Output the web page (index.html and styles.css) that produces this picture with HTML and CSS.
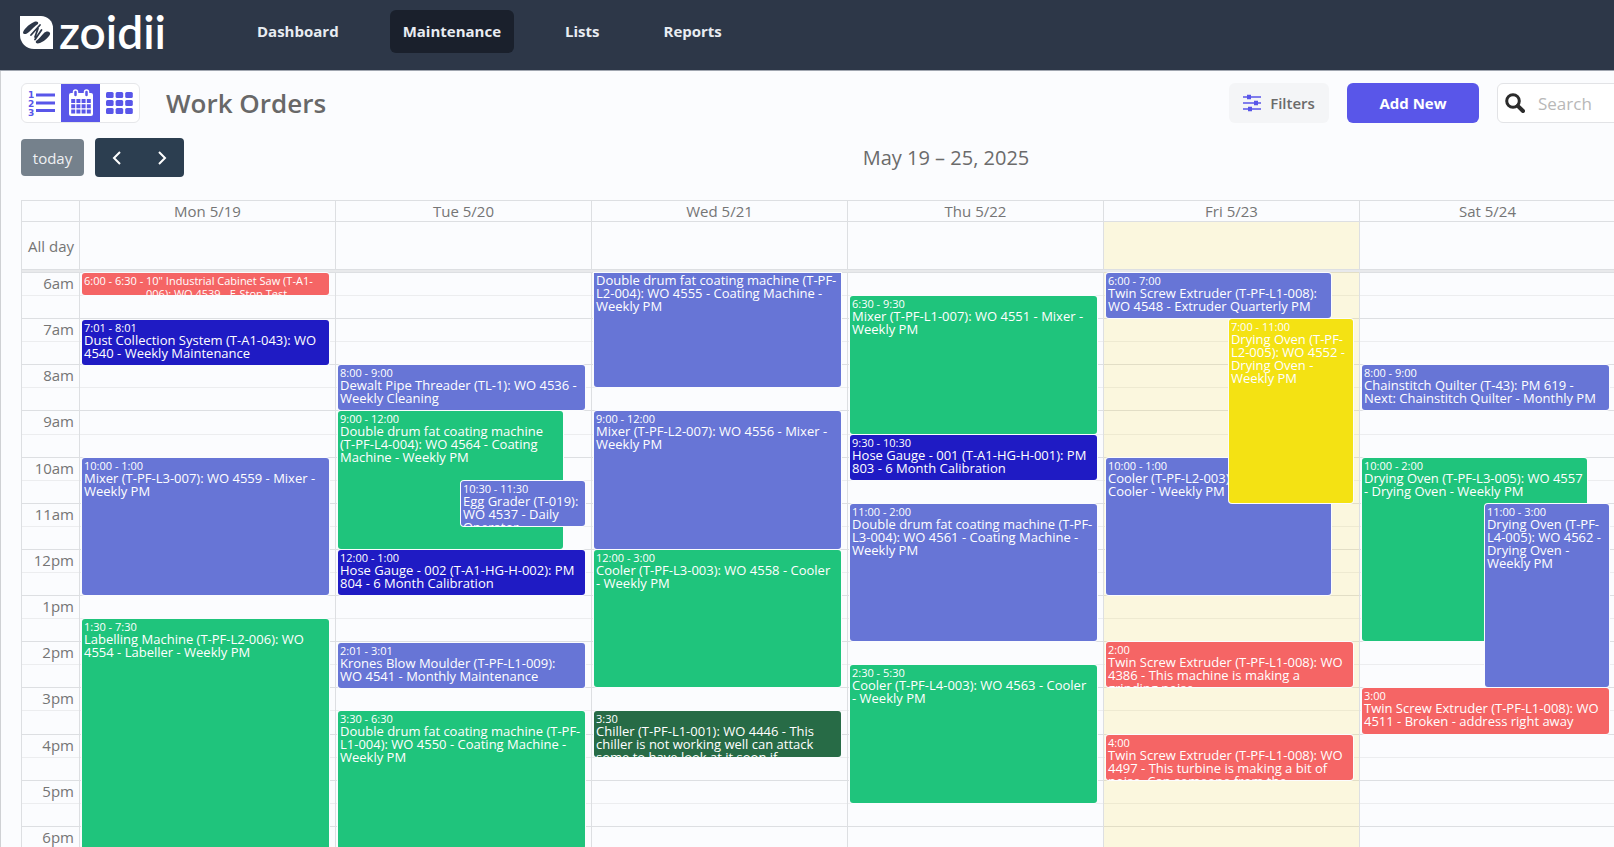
FILE: index.html
```
<!doctype html>

<html lang="en">
<head>
  <meta charset="utf-8">
  <title>Work Orders - Zoidii</title>
  <meta name="viewport" content="width=device-width, initial-scale=1" />
  <link rel="stylesheet" href="styles.css">
</head>

<body>
  <header class="topbar">
    <a class="logo" href="#">
      <svg width="33" height="33" viewBox="0 0 33 33" aria-hidden="true">
        <path fill="#fff" d="M0 0H21A12 12 0 0 1 33 12V33H14A14 14 0 0 1 0 19Z"/>
        <path fill="#2d3748" d="M3 17C3 14 9 8 14 6C17 5 19 6 18 8C15 10 11 14 9 16C7 18 4 19 3 17Z"/>
        <path fill="#2d3748" d="M30 17C31 19 25 25 20 27C17 28 15 27 16 25C19 23 22 19 24 17C26 15 29 15 30 17Z"/>
        <path d="M20 9L11 19M21.500 14L15 23.500M18 12.500L15 21" stroke="#2d3748" stroke-width="1.800" stroke-linecap="round"/>
      </svg>
      <span>zoidii</span>
    </a>
    <nav class="nav">
      <a href="#">Dashboard</a>
      <a href="#" class="active">Maintenance</a>
      <a href="#">Lists</a>
      <a href="#">Reports</a>
    </nav>
  </header>

  <main class="page">
    <div class="page-head">
      <div class="views">
        <button aria-label="List view">
          <svg width="28" height="28" viewBox="0 0 28 28">
            <g class="digits"><text x="0" y="9">1</text><text x="0" y="18">2</text><text x="0" y="27">3</text></g>
            <path d="M8 6H27M8 14H27M8 21.500H27" stroke="currentColor" stroke-width="3"/>
          </svg>
        </button>
        <button class="active" aria-label="Calendar view">
          <svg width="26" height="28" viewBox="0 0 26 28">
            <rect x="1" y="4" width="24" height="23" rx="2" fill="#fff"/>
            <path d="M3.200 12H22.800M3.200 17.300H22.800M3.200 22.600H22.800" stroke="#5956e9" stroke-width="4" stroke-dasharray="4 1.200"/>
            <rect x="5.500" y="1" width="4" height="7" rx="2" fill="#5956e9" stroke="#fff" stroke-width="1.500"/>
            <rect x="16.500" y="1" width="4" height="7" rx="2" fill="#5956e9" stroke="#fff" stroke-width="1.500"/>
          </svg>
        </button>
        <button aria-label="Grid view">
          <svg width="27" height="22" viewBox="0 0 27 22" fill="currentColor">
            <rect x="0" y="0" width="7.600" height="6" rx="1.500"/><rect x="9.600" y="0" width="7.600" height="6" rx="1.500"/><rect x="19.200" y="0" width="7.600" height="6" rx="1.500"/>
            <rect x="0" y="8" width="7.600" height="6" rx="1.500"/><rect x="9.600" y="8" width="7.600" height="6" rx="1.500"/><rect x="19.200" y="8" width="7.600" height="6" rx="1.500"/>
            <rect x="0" y="16" width="7.600" height="6" rx="1.500"/><rect x="9.600" y="16" width="7.600" height="6" rx="1.500"/><rect x="19.200" y="16" width="7.600" height="6" rx="1.500"/>
          </svg>
        </button>
      </div>
      <h1>Work Orders</h1>
      <div class="actions">
        <button class="filters">
          <svg width="18" height="18" viewBox="0 0 18 18" stroke="#5956e9" stroke-width="1.600" aria-hidden="true">
            <path d="M0 3H18M0 9H18M0 15H18"/>
            <path d="M4 3H8M11 9H15M5 15H9" stroke-width="4.500"/>
          </svg>
          Filters
        </button>
        <button class="add">Add New</button>
        <label class="search">
          <svg width="20" height="20" viewBox="0 0 20 20" fill="none" stroke="#2b2b2b" aria-hidden="true">
            <circle cx="8" cy="8" r="6.300" stroke-width="3"/>
            <path d="M12.800 12.800L18 18" stroke-width="4" stroke-linecap="round"/>
          </svg>
          <input type="text" placeholder="Search" aria-label="Search">
        </label>
      </div>
    </div>

    <div class="toolbar">
      <div class="toolbar-left">
        <button class="today-btn">today</button>
        <div class="prev-next">
          <button aria-label="Previous week">
            <svg width="10" height="16" viewBox="0 0 10 16"><path d="M8 2L2 8L8 14" fill="none" stroke="#fff" stroke-width="2"/></svg>
          </button>
          <button aria-label="Next week">
            <svg width="10" height="16" viewBox="0 0 10 16"><path d="M2 2L8 8L2 14" fill="none" stroke="#fff" stroke-width="2"/></svg>
          </button>
        </div>
      </div>
      <h2>May 19 – 25, 2025</h2>
    </div>

    <div class="calendar">
      <table class="days">
        <thead>
          <tr>
            <th class="axis"></th>
            <th>Mon 5/19</th>
            <th>Tue 5/20</th>
            <th>Wed 5/21</th>
            <th>Thu 5/22</th>
            <th>Fri 5/23</th>
            <th>Sat 5/24</th>
            <th></th>
          </tr>
        </thead>
        <tbody>
          <tr>
            <td class="axis">All day</td>
            <td></td>
            <td></td>
            <td></td>
            <td></td>
            <td class="today"></td>
            <td></td>
            <td></td>
          </tr>
        </tbody>
      </table>
      <div class="divider"></div>

      <div class="timegrid">
        <div class="slots">
          <div>6am</div><div></div>
          <div>7am</div><div></div>
          <div>8am</div><div></div>
          <div>9am</div><div></div>
          <div>10am</div><div></div>
          <div>11am</div><div></div>
          <div>12pm</div><div></div>
          <div>1pm</div><div></div>
          <div>2pm</div><div></div>
          <div>3pm</div><div></div>
          <div>4pm</div><div></div>
          <div>5pm</div><div></div>
          <div>6pm</div><div></div>
        </div>

        <!-- one grid row per minute, row 1 is 6:00 -->
        <div class="columns">
          <div class="day">
            <a href="#" class="event red short" style="grid-row: 1 / 31"><time>6:00 - 6:30 -&nbsp;</time><span>10" Industrial Cabinet Saw (T-A1-006): WO 4539 - E-Stop Test</span></a>
            <a href="#" class="event navy" style="grid-row: 62 / 122"><time>7:01 - 8:01</time><span>Dust Collection System (T-A1-043): WO 4540 - Weekly Maintenance</span></a>
            <a href="#" class="event blue" style="grid-row: 241 / 421"><time>10:00 - 1:00</time><span>Mixer (T-PF-L3-007): WO 4559 - Mixer - Weekly PM</span></a>
            <a href="#" class="event green" style="grid-row: 451 / 781"><time>1:30 - 7:30</time><span>Labelling Machine (T-PF-L2-006): WO 4554 - Labeller - Weekly PM</span></a>
          </div>

          <div class="day">
            <a href="#" class="event blue" style="grid-row: 121 / 181"><time>8:00 - 9:00</time><span>Dewalt Pipe Threader (TL-1): WO 4536 - Weekly Cleaning</span></a>
            <a href="#" class="event green under" style="grid-row: 181 / 361"><time>9:00 - 12:00</time><span>Double drum fat coating machine (T-PF-L4-004): WO 4564 - Coating Machine - Weekly PM</span></a>
            <a href="#" class="event blue over" style="grid-row: 271 / 331"><time>10:30 - 11:30</time><span>Egg Grader (T-019): WO 4537 - Daily Operator</span></a>
            <a href="#" class="event navy" style="grid-row: 361 / 421"><time>12:00 - 1:00</time><span>Hose Gauge - 002 (T-A1-HG-H-002): PM 804 - 6 Month Calibration</span></a>
            <a href="#" class="event blue" style="grid-row: 482 / 542"><time>2:01 - 3:01</time><span>Krones Blow Moulder (T-PF-L1-009): WO&nbsp;4541 - Monthly Maintenance</span></a>
            <a href="#" class="event green" style="grid-row: 571 / 751"><time>3:30 - 6:30</time><span>Double drum fat coating machine (T-PF-L1-004): WO 4550 - Coating Machine - Weekly PM</span></a>
          </div>

          <div class="day">
            <a href="#" class="event blue continued" style="grid-row: 1 / 151"><span>Double drum fat coating machine (T-PF-L2-004): WO 4555 - Coating Machine - Weekly PM</span></a>
            <a href="#" class="event blue" style="grid-row: 181 / 361"><time>9:00 - 12:00</time><span>Mixer (T-PF-L2-007): WO 4556 - Mixer - Weekly PM</span></a>
            <a href="#" class="event green" style="grid-row: 361 / 541"><time>12:00 - 3:00</time><span>Cooler (T-PF-L3-003): WO 4558 - Cooler - Weekly PM</span></a>
            <a href="#" class="event forest" style="grid-row: 571 / 631"><time>3:30</time><span>Chiller (T-PF-L1-001): WO 4446 - This chiller is not working well can attack some to have look at it soon if</span></a>
          </div>

          <div class="day">
            <a href="#" class="event green" style="grid-row: 31 / 211"><time>6:30 - 9:30</time><span>Mixer (T-PF-L1-007): WO 4551 - Mixer - Weekly PM</span></a>
            <a href="#" class="event navy" style="grid-row: 211 / 271"><time>9:30 - 10:30</time><span>Hose Gauge - 001 (T-A1-HG-H-001): PM 803 - 6 Month Calibration</span></a>
            <a href="#" class="event blue" style="grid-row: 301 / 481"><time>11:00 - 2:00</time><span>Double drum fat coating machine (T-PF-L3-004): WO 4561 - Coating Machine - Weekly PM</span></a>
            <a href="#" class="event green" style="grid-row: 511 / 691"><time>2:30 - 5:30</time><span>Cooler (T-PF-L4-003): WO 4563 - Cooler - Weekly PM</span></a>
          </div>

          <div class="day today">
            <a href="#" class="event blue under" style="grid-row: 1 / 61"><time>6:00 - 7:00</time><span>Twin Screw Extruder (T-PF-L1-008): WO 4548 - Extruder Quarterly PM</span></a>
            <a href="#" class="event blue under" style="grid-row: 241 / 421"><time>10:00 - 1:00</time><span>Cooler (T-PF-L2-003): WO 4560 - Cooler - Weekly PM</span></a>
            <a href="#" class="event yellow over" style="grid-row: 61 / 301"><time>7:00 - 11:00</time><span>Drying Oven (T-PF-L2-005): WO 4552 - Drying Oven - Weekly PM</span></a>
            <a href="#" class="event red" style="grid-row: 481 / 541"><time>2:00</time><span>Twin Screw Extruder (T-PF-L1-008): WO 4386 - This machine is making a grinding noise</span></a>
            <a href="#" class="event red" style="grid-row: 601 / 661"><time>4:00</time><span>Twin Screw Extruder (T-PF-L1-008): WO 4497 - This turbine is making a bit of noise. Can someone from the</span></a>
          </div>

          <div class="day">
            <a href="#" class="event blue" style="grid-row: 121 / 181"><time>8:00 - 9:00</time><span>Chainstitch Quilter (T-43): PM 619 - Next: Chainstitch Quilter - Monthly PM</span></a>
            <a href="#" class="event green under" style="grid-row: 241 / 481"><time>10:00 - 2:00</time><span>Drying Oven (T-PF-L3-005): WO 4557 - Drying Oven - Weekly PM</span></a>
            <a href="#" class="event blue over" style="grid-row: 301 / 541"><time>11:00 - 3:00</time><span>Drying Oven (T-PF-L4-005): WO 4562 - Drying Oven - Weekly PM</span></a>
            <a href="#" class="event red" style="grid-row: 541 / 601"><time>3:00</time><span>Twin Screw Extruder (T-PF-L1-008): WO 4511 - Broken - address right away</span></a>
          </div>

          <div class="day"></div>
        </div>
      </div>
    </div>
  </main>
</body>
</html>
```
FILE: styles.css
```
* {
  box-sizing: border-box;
}

body {
  margin: 0;
  background: #fbfcfe;
  color: #6b6b6b;
  font-family: "Open Sans", "Noto Sans", sans-serif;
  font-size: 15px;
  overflow: hidden;
}

button {
  border: 0;
  padding: 0;
  font: inherit;
  color: inherit;
  cursor: pointer;
}

a {
  color: inherit;
  text-decoration: none;
}

h1, h2 {
  margin: 0;
}

.topbar {
  display: flex;
  align-items: flex-start;
  height: 71px;
  padding: 10px 20px 0;
  background: #2d3748;
  border-bottom: 1px solid #a0a6b0;
  color: #e8ecf2;
}

.logo {
  display: flex;
  align-items: center;
  gap: 6px;
  width: 224px;
  height: 44px;
  color: #fff;
  font-family: Lato, sans-serif;
  font-size: 46px;
  font-weight: 600;
  line-height: 44px;
}

.nav {
  display: flex;
  gap: 38px;
}

.nav a {
  padding: 0 13px;
  border-radius: 6px;
  font-weight: 700;
  line-height: 43px;
}

.nav .active {
  background: #1a202c;
}

/* the week is wider than the window, sunday runs off the right side */
.page {
  width: calc(100% + 257px);
  padding: 12px 0 0 20px;
  border-left: 1px solid #cfd1d4;
}

.page-head {
  display: flex;
  align-items: center;
  padding-right: 20px;
}

.views {
  display: flex;
  height: 40px;
  width: 119px;
  border: 1px solid #e6e7ea;
  border-radius: 6px;
  background: #fff;
  overflow: hidden;
  color: #5956e9;
}

.views button {
  display: flex;
  flex: 1;
  align-items: center;
  justify-content: center;
  background: none;
}

.views .active {
  background: #5956e9;
}

.digits {
  fill: currentColor;
  font-family: "DejaVu Sans", sans-serif;
  font-size: 9px;
  font-weight: 700;
}

h1 {
  margin-left: 26px;
  color: #686868;
  font-size: 26px;
  font-weight: 600;
  line-height: 40px;
}

.actions {
  display: flex;
  gap: 18px;
  margin-left: auto;
}

.filters {
  display: flex;
  align-items: center;
  justify-content: center;
  gap: 9px;
  width: 100px;
  height: 40px;
  border-radius: 6px;
  background: #f4f5f7;
  font-weight: 600;
}

.add {
  width: 132px;
  border-radius: 6px;
  background: #5956e9;
  color: #fff;
  font-weight: 700;
}

.search {
  display: flex;
  align-items: center;
  gap: 11px;
  width: 354px;
  height: 40px;
  padding: 0 7px;
  border: 1px solid #e2e3e6;
  border-radius: 6px;
  background: #fff;
}

.search input {
  flex: 1;
  border: 0;
  outline: 0;
  font: inherit;
  font-size: 17px;
}

.search input::placeholder {
  color: #b8b8b8;
}

.toolbar {
  display: grid;
  grid-template-columns: 1fr auto 1fr;
  align-items: center;
  margin: 15px 0 23px;
}

.toolbar-left {
  display: flex;
  align-items: center;
  gap: 11px;
}

.today-btn {
  width: 63px;
  height: 37px;
  border-radius: 4px;
  background: #75818c;
  color: #eef0f2;
}

.prev-next {
  display: flex;
  width: 89px;
  height: 39px;
  border-radius: 4px;
  background: #2c3e50;
}

.prev-next button {
  display: flex;
  flex: 1;
  align-items: center;
  justify-content: center;
  background: none;
}

h2 {
  font-size: 20px;
  font-weight: 400;
}

.calendar {
  border-top: 1px solid #dddfe2;
  border-left: 1px solid #dddfe2;
  color: #757575;
}

.days {
  width: 100%;
  table-layout: fixed;
  border-collapse: separate;
  border-spacing: 0;
}

.days th,
.days td {
  padding: 0;
  border-left: 1px solid #dddfe2;
  font-weight: 400;
  line-height: 20px;
  text-align: center;
}

.days td {
  height: 48px;
  border-top: 1px solid #dddfe2;
}

.days .axis {
  width: 57px;
  padding-right: 5px;
  border-left: 0;
  text-align: right;
}

.today {
  background: rgba(255, 220, 40, 0.15);
}

.divider {
  height: 3px;
  border-top: 1px solid #dddfe2;
  background: #e8e9eb;
}

.timegrid {
  display: grid;
  grid-template-rows: minmax(0, 1fr);
  height: 600px;
}

.slots,
.columns {
  display: grid;
  grid-area: 1 / 1;
  min-height: 0;
}

.slots {
  grid-template-rows: repeat(26, minmax(0, 1fr));
}

.slots div {
  padding-right: calc(100% - 52px);
  border-top: 1px solid #dddfe2;
  line-height: 21px;
  text-align: right;
}

.slots div:nth-child(even) {
  border-color: #ecedef;
}

.columns {
  grid-template-columns: repeat(7, minmax(0, 1fr));
  grid-template-rows: minmax(0, 1fr);
  margin-left: 57px;
}

.day {
  display: grid;
  grid-template-rows: repeat(780, minmax(0, 1fr));
  border-left: 1px solid #dddfe2;
}

.event {
  grid-column: 1;
  margin: 1px 6px 0 2px;
  padding: 1px 4px 0 2px;
  border-radius: 3px;
  box-shadow: 0 0 0 1px #fbfcfe;
  color: #fff;
  font-size: 13px;
  line-height: 13px;
  overflow: hidden;
}

.event time {
  display: block;
  font-size: 11px;
}

.event span {
  display: block;
}

.event.short {
  display: flex;
  font-size: 11px;
}

.event.short time {
  flex: none;
}

.event.continued {
  border-radius: 0 0 3px 3px;
}

.event.under {
  margin-right: 11%;
}

.event.over {
  margin-left: 49%;
}

.blue {
  background: #6775d6;
}

.green {
  background: #1fc47c;
}

.navy {
  background: #1f1bc4;
}

.red {
  background: #f56565;
}

.yellow {
  background: #f4e213;
}

.forest {
  background: #276b46;
}
```
